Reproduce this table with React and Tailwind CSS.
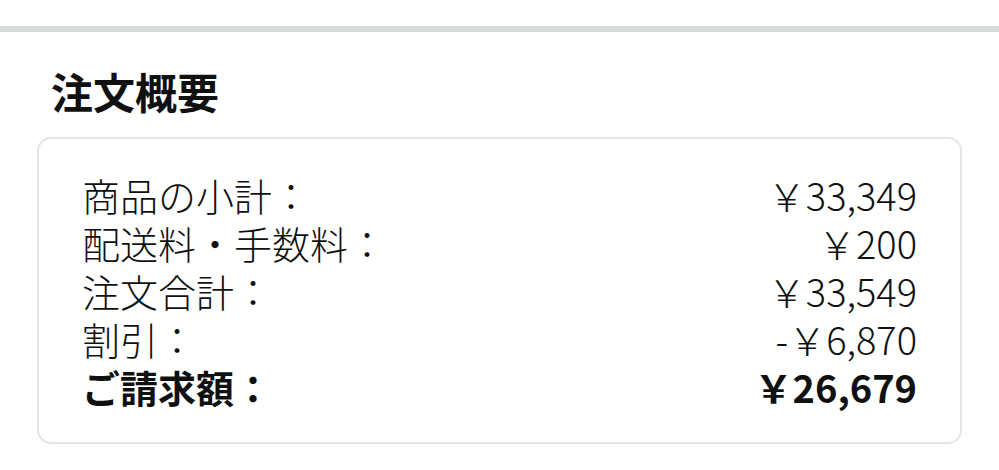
export default function App() {
  const rows = [
    ["商品の小計：", "￥33,349"],
    ["配送料・手数料：", "￥200"],
    ["注文合計：", "￥33,549"],
    ["割引：", "-￥6,870"],
  ];
  return (
    <div className="w-[999px] h-[470px] bg-white text-[#0f1111] overflow-hidden" style={{ fontFamily: '"Noto Sans CJK JP", "Noto Sans", sans-serif' }}>
      <div className="h-[26px]" />
      <div className="h-[6px] bg-[#d5dbdb]" />
      <div className="pl-[37px] pr-[37px]">
        <h2 className="mt-[35px] ml-[14px] text-[42px] leading-[48px] font-bold">注文概要</h2>
        <div className="mt-[22px] border-2 border-[#e3e6e6] rounded-[14px] pl-[43px] pr-[43px] pt-[32px] pb-[31px] text-[38px] leading-[48px] font-light">
          {rows.map(([l, v]) => (
            <div key={l} className="flex justify-between">
              <span>{l}</span>
              <span>{v}</span>
            </div>
          ))}
          <div className="flex justify-between font-bold">
            <span>ご請求額：</span>
            <span>￥26,679</span>
          </div>
        </div>
      </div>
    </div>
  );
}
